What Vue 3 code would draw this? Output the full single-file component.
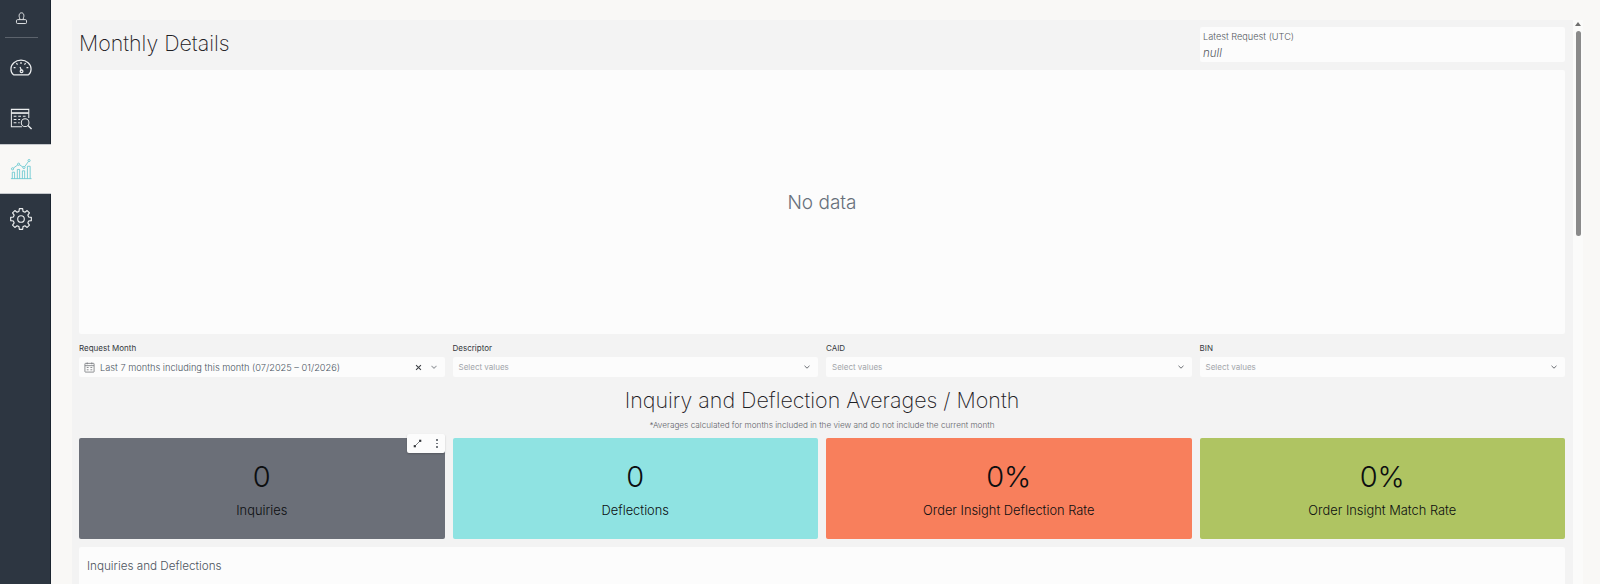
<template>
  <div class="page">
    <!-- Left nav -->
    <nav class="sidebar">
      <div class="user-slot">
        <svg class="icon-user" viewBox="0 0 16 16" fill="none" stroke="#e4e6e8" stroke-width="1.2">
          <path d="M5.8 9.2 V7.4 C4.6 5.8 4.6 1 8 1 C11.4 1 11.4 5.8 10.2 7.4 V9.2" />
          <rect x="1.8" y="9.4" width="12.4" height="4.8" rx="1.4" />
        </svg>
      </div>
      <div class="nav-divider"></div>
      <div class="nav-item gauge">
        <svg class="icon" viewBox="0 0 24 24" fill="none" stroke="#eceeef" stroke-width="1.3">
          <path d="M4 19.5 C1.5 17.5 1 15 1 13 C1 7.5 6 3.5 12 3.5 C18 3.5 23 7.5 23 13 C23 15 22.5 17.5 20 19.5 Z" />
          <path d="M4 11.5 H6 M7 6.8 L8.2 8.3 M12 5.5 V7.5 M17 6.8 L15.8 8.3 M20 11.5 H18" />
          <path d="M11 11 L12.5 15" />
          <circle cx="12.6" cy="15.6" r="1.5" />
        </svg>
      </div>
      <div class="nav-item">
        <svg class="icon" viewBox="0 0 24 24" fill="none" stroke="#eceeef" stroke-width="1.1">
          <path d="M13 20.5 H1.5 V1.5 H20.5 V11" />
          <path d="M1.5 5.5 H20.5" stroke-width="1.8" />
          <path d="M4 9 H7 M9 9 H12 M14 9 H17 M4 12.5 H7 M9 12.5 H11 M4 16 H7 M9 16 H10.5" />
          <circle cx="16.5" cy="16" r="4.2" />
          <path d="M19.6 19 L23.5 23" stroke-width="1.5" />
        </svg>
      </div>
      <div class="nav-item active">
        <svg class="icon" viewBox="0 0 24 24" fill="none" stroke="#62c6cf" stroke-width="0.9">
          <path d="M1 22.5 H23.5" />
          <path d="M2.5 22.5 V15.5 H5 V22.5 M8 22.5 V12.5 H10.5 V22.5 M13.5 22.5 V14 H16 V22.5 M19 22.5 V9 H22 V22.5" />
          <path d="M3.7 11 L8.5 7.5 M10.5 7.5 L14.3 10 M16 9.5 L20 4" />
          <circle cx="2.8" cy="11.8" r="1.2" />
          <circle cx="9.4" cy="6.8" r="1.2" />
          <circle cx="15.2" cy="10.4" r="1.2" />
          <circle cx="20.8" cy="2.8" r="1.2" />
        </svg>
      </div>
      <div class="nav-item">
        <svg class="icon" viewBox="0 0 24 24" fill="none" stroke="#eceeef" stroke-width="1.25" stroke-linejoin="round">
          <path :d="gearPath" />
          <circle cx="12" cy="12" r="3.6" />
        </svg>
      </div>
    </nav>

    <main class="content">
      <section class="panel">
        <div class="header-row">
          <h1 class="page-title">Monthly Details</h1>
          <div class="latest-card">
            <div class="latest-label">Latest Request (UTC)</div>
            <div class="latest-value">null</div>
          </div>
        </div>

        <div class="chart-empty">No data</div>

        <div class="filters">
          <div v-for="filter in filters" :key="filter.label" class="filter">
            <label class="filter-label">{{ filter.label }}</label>
            <div class="select">
              <template v-if="filter.value">
                <svg class="cal-icon" viewBox="0 0 12 12" fill="none" stroke="#77797e" stroke-width="0.9">
                  <rect x="1" y="1.5" width="10" height="9.5" rx="0.5" />
                  <path d="M1 4 H11 M3.5 0.5 V2.5 M8.5 0.5 V2.5 M3 6 H5 M7 6 H9 M3 8.5 H5 M7 8.5 H9" />
                </svg>
                <span class="select-value">{{ filter.value }}</span>
                <svg class="clear-icon" viewBox="0 0 8 8" stroke="#3c3f44" stroke-width="1.2">
                  <path d="M1.2 1.2 L6.8 6.8 M6.8 1.2 L1.2 6.8" />
                </svg>
                <svg class="chevron" viewBox="0 0 8 8" fill="none" stroke="#a3a6aa" stroke-width="1.1">
                  <path d="M1.5 2.8 L4 5.2 L6.5 2.8" />
                </svg>
              </template>
              <template v-else>
                <span class="select-placeholder">Select values</span>
                <svg class="chevron" viewBox="0 0 8 8" fill="none" stroke="#6a6e73" stroke-width="1">
                  <path d="M1.5 2.8 L4 5.2 L6.5 2.8" />
                </svg>
              </template>
            </div>
          </div>
        </div>

        <h2 class="section-title">Inquiry and Deflection Averages / Month</h2>
        <p class="section-note">*Averages calculated for months included in the view and do not include the current month</p>

        <div class="kpis">
          <div v-for="kpi in kpis" :key="kpi.label" class="kpi" :class="kpi.tone">
            <div class="kpi-value">{{ kpi.value }}</div>
            <div class="kpi-label">{{ kpi.label }}</div>
            <div v-if="kpi.tone === 'grey'" class="kpi-toolbar">
              <svg class="expand-icon" viewBox="0 0 10 10" fill="#33363a" stroke="#33363a" stroke-width="0.7">
                <path d="M2.5 7.5 L7.5 2.5" />
                <rect x="0.8" y="6.8" width="2.4" height="2.4" stroke="none" />
                <rect x="6.8" y="0.8" width="2.4" height="2.4" stroke="none" />
              </svg>
              <div class="dots"><i></i><i></i><i></i></div>
            </div>
          </div>
        </div>

        <div class="bottom-card">Inquiries and Deflections</div>
      </section>

      <!-- Scroll track -->
      <div class="scrollbar">
        <div class="scroll-arrow"></div>
        <div class="scroll-thumb"></div>
      </div>
    </main>
  </div>
</template>

<script setup>
const filters = [
  { label: "Request Month", value: "Last 7 months including this month (07/2025 – 01/2026)" },
  { label: "Descriptor" },
  { label: "CAID" },
  { label: "BIN" },
];

const kpis = [
  { value: "0", label: "Inquiries", tone: "grey" },
  { value: "0", label: "Deflections", tone: "teal" },
  { value: "0%", label: "Order Insight Deflection Rate", tone: "orange" },
  { value: "0%", label: "Order Insight Match Rate", tone: "green" },
];

// Eight stubby teeth around the settings cog
const gearPath = (() => {
  const point = (radius, angle) => {
    const rad = (angle * Math.PI) / 180;
    return `${(12 + radius * Math.cos(rad)).toFixed(2)} ${(12 + radius * Math.sin(rad)).toFixed(2)}`;
  };
  const parts = [];
  for (let i = 0; i < 8; i++) {
    const mid = i * 45 - 90;
    parts.push(point(8.6, mid - 15), point(11.4, mid - 9), point(11.4, mid + 9), point(8.6, mid + 15));
  }
  return `M${parts.join(" L")} Z`;
})();
</script>

<style>
html,
body {
  margin: 0;
  background: #f9f8f6;
}
</style>

<style scoped>
.page {
  display: flex;
  width: 1600px;
  height: 584px;
  overflow: hidden;
  background: #f9f8f6;
  font-family: Inter, "Liberation Sans", sans-serif;
  color: #2f3338;
}

.sidebar {
  flex: 0 0 50px;
  display: flex;
  flex-direction: column;
  background: #2d3641;
  border-right: 1px solid #1c2530;
}

.user-slot {
  height: 37px;
  display: flex;
  align-items: center;
  justify-content: center;
}

.icon-user {
  width: 13px;
  height: 13px;
  margin-left: -8px;
}

.nav-divider {
  height: 1px;
  width: 33px;
  margin-left: 5px;
  background: #5c636c;
}

.nav-item {
  height: 50px;
  display: flex;
  align-items: center;
  justify-content: center;
  padding-right: 8px;
  box-sizing: border-box;
}

.nav-item.gauge {
  height: 56px;
  padding-top: 4px;
}

.nav-item.active {
  margin-right: -1px;
  background: #f9f8f6;
  border-top: 1px solid #c5c8cc;
  border-bottom: 1px solid #c5c8cc;
  padding-right: 9px;
}

.icon {
  width: 22px;
  height: 22px;
}

.content {
  flex: 1;
  display: flex;
  padding: 20px 17px 0 21px;
  min-width: 0;
}

.panel {
  flex: 1;
  min-width: 0;
  background: #f3f3f3;
  padding: 7px 8px 0 7px;
}

.header-row {
  display: flex;
  align-items: center;
  justify-content: space-between;
  height: 35px;
}

.page-title {
  margin: 0;
  padding-bottom: 4px;
  font-size: 21.4px;
  font-weight: 200;
  color: #1d2024;
}

.latest-card {
  width: 365px;
  height: 35px;
  box-sizing: border-box;
  padding: 2px 3px;
  background: #fcfcfc;
  border-radius: 2px;
}

.latest-label {
  font-size: 9.2px;
  line-height: 15px;
  font-weight: 300;
  color: #55595f;
}

.latest-value {
  font-size: 11.5px;
  line-height: 19px;
  font-style: italic;
  font-weight: 300;
  color: #55595f;
}

.chart-empty {
  height: 264px;
  margin-top: 8px;
  display: flex;
  align-items: center;
  justify-content: center;
  background: #fcfcfc;
  border-radius: 2px;
  font-size: 19px;
  font-weight: 300;
  color: #68707b;
}

.filters,
.kpis {
  display: grid;
  grid-template-columns: repeat(4, 1fr);
  gap: 8px;
}

.filters {
  margin-top: 8px;
}

.filter-label {
  display: block;
  height: 15px;
  font-size: 8px;
  line-height: 13px;
  color: #34373c;
}

.select {
  height: 20px;
  display: flex;
  align-items: center;
  padding: 0 7px 0 5px;
  background: #fcfcfc;
  border-radius: 2px;
}

.cal-icon {
  width: 11px;
  height: 11px;
  margin-right: 5px;
}

.select-value {
  flex: 1;
  font-size: 9.25px;
  font-weight: 300;
  color: #4a5462;
  white-space: nowrap;
}

.select-placeholder {
  flex: 1;
  padding-left: 1px;
  font-size: 8px;
  color: #a2a5aa;
}

.clear-icon {
  width: 7px;
  height: 7px;
  margin-right: 8px;
}

.chevron {
  width: 8px;
  height: 8px;
}

.section-title {
  margin: 9px 0 0;
  text-align: center;
  font-size: 21.45px;
  line-height: 28px;
  font-weight: 200;
  color: #1d2024;
}

.section-note {
  margin: 5px 0 0;
  text-align: center;
  font-size: 8.2px;
  line-height: 12px;
  font-weight: 300;
  color: #5f636a;
}

.kpis {
  margin-top: 7px;
}

.kpi {
  position: relative;
  height: 101px;
  box-sizing: border-box;
  padding-top: 21px;
  text-align: center;
  border-radius: 2px;
  color: #0c0e10;
}

.kpi.grey {
  background: #6b6f78;
}

.kpi.teal {
  background: #8fe3e2;
}

.kpi.orange {
  background: #f87f5c;
}

.kpi.green {
  background: #afc462;
}

.kpi-value {
  font-size: 29px;
  line-height: 36px;
  font-weight: 300;
}

.kpi-label {
  margin-top: 7px;
  font-size: 12.85px;
  line-height: 18px;
  font-weight: 300;
}

.kpi-toolbar {
  position: absolute;
  top: -4px;
  right: 0;
  width: 38px;
  height: 19px;
  display: flex;
  align-items: center;
  justify-content: space-between;
  box-sizing: border-box;
  padding: 0 7px 0 6px;
  background: #fcfcfc;
  border-radius: 2px;
  box-shadow: 0 1px 2px rgba(0, 0, 0, 0.2);
}

.expand-icon {
  width: 9px;
  height: 9px;
}

.dots {
  display: flex;
  flex-direction: column;
  gap: 2px;
}

.dots i {
  display: block;
  width: 1.5px;
  height: 1.5px;
  background: #74787e;
}

.bottom-card {
  margin-top: 8px;
  height: 60px;
  padding: 12px 8px;
  box-sizing: border-box;
  background: #fcfcfc;
  border-radius: 2px 2px 0 0;
  font-size: 11.7px;
  line-height: 15px;
  font-weight: 300;
  color: #4d5560;
}

.scrollbar {
  flex: 0 0 10px;
  display: flex;
  flex-direction: column;
  align-items: center;
  background: #fbfbfa;
}

.scroll-arrow {
  margin-top: 2px;
  width: 0;
  height: 0;
  border-left: 3px solid transparent;
  border-right: 3px solid transparent;
  border-bottom: 4px solid #6e6e6e;
}

.scroll-thumb {
  margin-top: 5px;
  width: 5px;
  height: 205px;
  border-radius: 3px;
  background: #8a8a8a;
}
</style>
